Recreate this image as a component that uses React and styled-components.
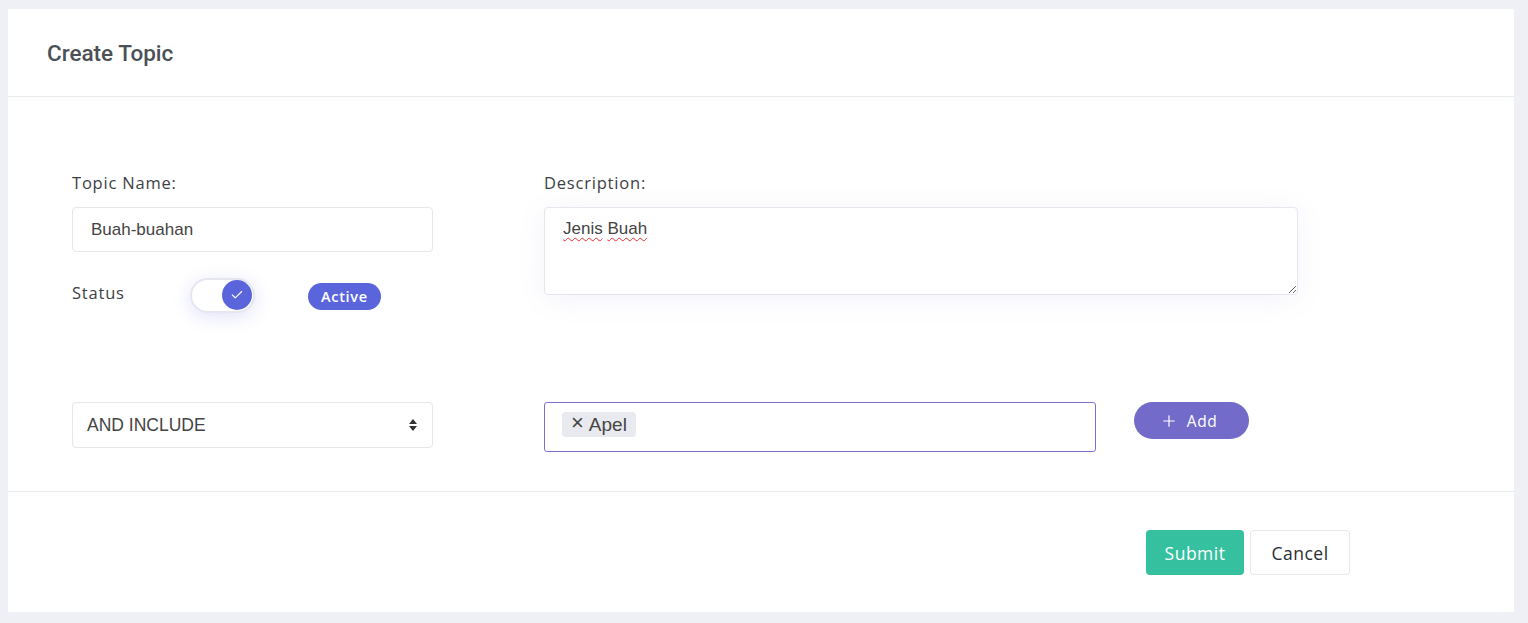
import React, { useState } from 'react'
import styled, { createGlobalStyle } from 'styled-components'
import { Plus, Check } from 'lucide-react'

const GlobalStyle = createGlobalStyle`
  html, body {
    margin: 0;
    background: #eef0f5;
  }
  body {
    font-family: "Open Sans", "Liberation Sans", sans-serif;
  }
`;

function App() {
  const [active, setActive] = useState(true);
  const [tags, setTags] = useState(['Apel']);

  return (
    <Page>
      <GlobalStyle />
      <Card>
        <Header>
          <Title>Create Topic</Title>
        </Header>
        <Body>
          <FormGrid>
            <Column>
              <Label>Topic Name:</Label>
              <TextInput defaultValue="Buah-buahan" />
              <StatusRow>
                <StatusLabel>Status</StatusLabel>
                <Toggle $on={active} onClick={() => setActive(!active)}>
                  <Knob $on={active}>
                    <Check size={14} strokeWidth={2} color="#fff" />
                  </Knob>
                </Toggle>
                <Badge>{active ? 'Active' : 'Inactive'}</Badge>
              </StatusRow>
            </Column>
            <Column>
              <Label>Description:</Label>
              <TextArea>
                <Misspelled>Jenis</Misspelled> <Misspelled>Buah</Misspelled>
              </TextArea>
            </Column>
          </FormGrid>
          <RuleRow>
            <SelectBox>
              <span>AND INCLUDE</span>
              <SortArrows viewBox="0 0 10 16">
                <path d="M5 2 L9 7 H1 Z" fill="#333" />
                <path d="M5 14 L9 9 H1 Z" fill="#333" />
              </SortArrows>
            </SelectBox>
            <TagGroup>
              <TagInput>
                {tags.map((t) => (
                  <Tag key={t}>
                    <TagClose onClick={() => setTags(tags.filter((x) => x !== t))}>×</TagClose>
                    {t}
                  </Tag>
                ))}
              </TagInput>
              <AddButton>
                <Plus size={18} strokeWidth={1.6} />
                Add
              </AddButton>
            </TagGroup>
          </RuleRow>
        </Body>
        <Footer>
          <SubmitButton>Submit</SubmitButton>
          <CancelButton>Cancel</CancelButton>
        </Footer>
      </Card>
    </Page>
  )
}

export default App

const Page = styled.div`
  padding: 9px 14px 11px 8px;
`;

const Card = styled.div`
  background: #fff;
  display: flex;
  flex-direction: column;
`;

const Header = styled.div`
  height: 88px;
  border-bottom: 1px solid #e9ebef;
  display: flex;
  align-items: center;
  padding-left: 39px;
  box-sizing: border-box;
`;

const Title = styled.h1`
  margin: 0;
  font-family: Roboto, "Liberation Sans", sans-serif;
  font-weight: 500;
  font-size: 22.5px;
  color: #4b5057;
  letter-spacing: 0;
`;

const Body = styled.div`
  padding: 78px 0 39px 64px;
  border-bottom: 1px solid #e9ebef;
`;

const FormGrid = styled.div`
  display: grid;
  grid-template-columns: 361px 754px;
  column-gap: 111px;
`;

const Column = styled.div`
  display: flex;
  flex-direction: column;
`;

const Label = styled.label`
  font-size: 16.5px;
  letter-spacing: 0.8px;
  color: #3c3f44;
  line-height: 16px;
  margin-bottom: 16px;
`;

const TextInput = styled.input`
  height: 45px;
  box-sizing: border-box;
  border: 1px solid #e6e7eb;
  border-radius: 4px;
  padding: 0 18px;
  font-family: "Liberation Sans", Arial, sans-serif;
  font-size: 17px;
  color: #444;
  outline: none;
`;

const StatusRow = styled.div`
  display: flex;
  align-items: center;
  margin-top: 25px;
  height: 36px;
`;

const StatusLabel = styled.span`
  font-size: 16.5px;
  letter-spacing: 0.8px;
  color: #3c3f44;
  width: 118px;
  margin-top: -5px;
`;

const Toggle = styled.div`
  width: 65px;
  height: 35px;
  box-sizing: border-box;
  border: 2px solid #e6e6f0;
  border-radius: 18px;
  background: #fff;
  box-shadow: 0 4px 18px rgba(90, 100, 220, 0.18);
  display: flex;
  align-items: center;
  justify-content: ${(p) => (p.$on ? 'flex-end' : 'flex-start')};
  padding: 0 1px;
  cursor: pointer;
`;

const Knob = styled.div`
  width: 30px;
  height: 30px;
  border-radius: 50%;
  background: ${(p) => (p.$on ? '#5a65dc' : '#c9cbd3')};
  display: flex;
  align-items: center;
  justify-content: center;
`;

const Badge = styled.span`
  margin-left: 53px;
  margin-top: 2px;
  height: 27px;
  padding: 0 13px;
  border-radius: 14px;
  background: #5a65dc;
  color: #fff;
  font-size: 14.5px;
  font-weight: 600;
  display: flex;
  align-items: center;
  letter-spacing: 0.7px;
`;

const TextArea = styled.div`
  height: 88px;
  box-sizing: border-box;
  border: 1px solid #e6e7ee;
  border-radius: 4px;
  padding: 11px 18px;
  font-family: "Liberation Sans", Arial, sans-serif;
  font-size: 17px;
  color: #444;
  resize: vertical;
  overflow: auto;
  box-shadow: 0 4px 28px rgba(120, 120, 200, 0.09);
`;

const Misspelled = styled.span`
  text-decoration: underline wavy #e03030;
  text-decoration-thickness: 1px;
  text-underline-offset: 3px;
`;

const RuleRow = styled.div`
  display: flex;
  align-items: flex-start;
  margin-top: 89px;
  gap: 111px;
`;

const SelectBox = styled.div`
  width: 361px;
  height: 46px;
  box-sizing: border-box;
  border: 1px solid #e6e7eb;
  border-radius: 4px;
  padding: 0 14px 0 14px;
  display: flex;
  align-items: center;
  justify-content: space-between;
  font-family: "Liberation Sans", Arial, sans-serif;
  font-size: 17.5px;
  color: #444;
`;

const SortArrows = styled.svg`
  width: 10px;
  height: 16px;
`;

const TagGroup = styled.div`
  display: flex;
  align-items: flex-start;
  gap: 38px;
`;

const TagInput = styled.div`
  width: 552px;
  height: 50px;
  box-sizing: border-box;
  border: 1px solid #7c70d2;
  border-radius: 3px;
  padding: 9px 17px;
  display: flex;
  align-items: flex-start;
`;

const Tag = styled.span`
  background: #e9eaef;
  border-radius: 4px;
  height: 25px;
  padding: 0 9px 0 9px;
  display: inline-flex;
  align-items: center;
  gap: 5px;
  font-family: "Liberation Sans", Arial, sans-serif;
  font-size: 19px;
  color: #444;
`;

const TagClose = styled.span`
  font-size: 22px;
  font-weight: 300;
  line-height: 1;
  cursor: pointer;
  margin-top: -3px;
`;

const AddButton = styled.button`
  height: 37px;
  width: 115px;
  border: none;
  border-radius: 19px;
  background: #726bc9;
  color: #fff;
  display: flex;
  align-items: center;
  justify-content: center;
  gap: 9px;
  font-family: "Open Sans", sans-serif;
  font-size: 15.5px;
  letter-spacing: 0.5px;
  font-weight: 500;
  padding: 0 6px 0 0;
  cursor: pointer;
`;

const Footer = styled.div`
  display: flex;
  justify-content: flex-end;
  gap: 6px;
  padding: 38px 164px 37px 0;
`;

const SubmitButton = styled.button`
  width: 98px;
  height: 45px;
  border: none;
  border-radius: 4px;
  background: #35c0a0;
  color: #fff;
  font-family: "Open Sans", sans-serif;
  font-size: 17.5px;
  letter-spacing: 0.5px;
  cursor: pointer;
`;

const CancelButton = styled.button`
  width: 100px;
  height: 45px;
  border: 1px solid #e6e7eb;
  border-radius: 4px;
  background: #fff;
  color: #2a2d33;
  font-family: "Open Sans", sans-serif;
  font-size: 17.5px;
  letter-spacing: 0.5px;
  cursor: pointer;
`;
